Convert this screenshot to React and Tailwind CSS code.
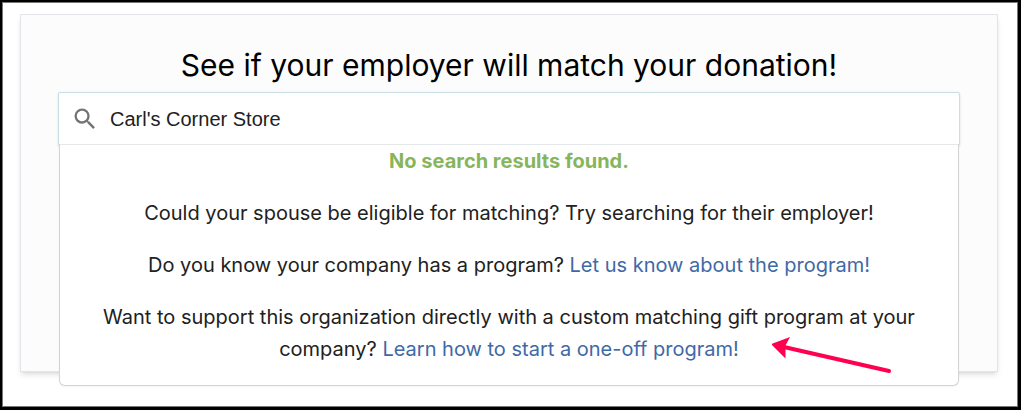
import React, { useState } from "react";
import { MdSearch } from "react-icons/md";

function SearchResults() {
    return (
        <div className="absolute inset-x-px top-[52px] flex flex-col gap-5 rounded-b-md border border-[#d4d4d4] border-t-[#e4e8ea] bg-white px-8 pb-5 text-center text-xl leading-8 text-[#212121] shadow-xs">
            <p className="font-bold text-[#87b55b]">No search results found.</p>
            <p>Could your spouse be eligible for matching? Try searching for their employer!</p>
            <p>
                Do you know your company has a program?{" "}
                <a href="#program" className="text-[#3f69a6]">Let us know about the program!</a>
            </p>
            <p>
                Want to support this organization directly with a custom matching gift program at your company?{" "}
                <a href="#one-off" className="text-[#3f69a6]">Learn how to start a one-off program!</a>
            </p>
            <Arrow />
        </div>
    );
}

function Arrow() {
    return (
        <svg
            className="absolute right-16 bottom-2"
            width="122"
            height="40"
            viewBox="0 0 122 40"
            aria-hidden="true"
        >
            <path d="M12 10 L117 34" stroke="#ff0050" strokeWidth="4" strokeLinecap="round" />
            <path d="M-1 7 L18 0 L13.500 8.500 L13.500 21.500 Z" fill="#ff0050" />
        </svg>
    );
}

function App() {
    const [employer, setEmployer] = useState("Carl's Corner Store");

    return (
        <div className="flex min-h-screen border-2 border-r-3 border-b-3 border-black bg-white font-['Inter',sans-serif]">
            <div className="flex flex-1 border border-[#777777] pt-[11px] pr-[19px] pb-[34px] pl-[17px]">
                <div className="flex-1 border border-[#e3e4ea] bg-[#fcfcfc] px-[37px] pt-[26px] shadow-md">
                    <label htmlFor="employer" className="mb-[3px] block text-center text-3xl leading-12 text-black">
                        See if your employer will match your donation!
                    </label>
                    <div className="relative">
                        <div className="flex h-[54px] items-center gap-[11px] rounded-xs border border-[#c8dfe6] bg-white px-3 shadow-sm">
                            <MdSearch className="size-7 text-[#737373]" />
                            <input
                                id="employer"
                                type="text"
                                value={employer}
                                onChange={(e) => setEmployer(e.target.value)}
                                className="min-w-0 flex-1 font-['Liberation_Sans',sans-serif] text-xl text-[#212121] outline-none"
                            />
                        </div>
                        <SearchResults />
                    </div>
                </div>
            </div>
        </div>
    );
}

export default App;
